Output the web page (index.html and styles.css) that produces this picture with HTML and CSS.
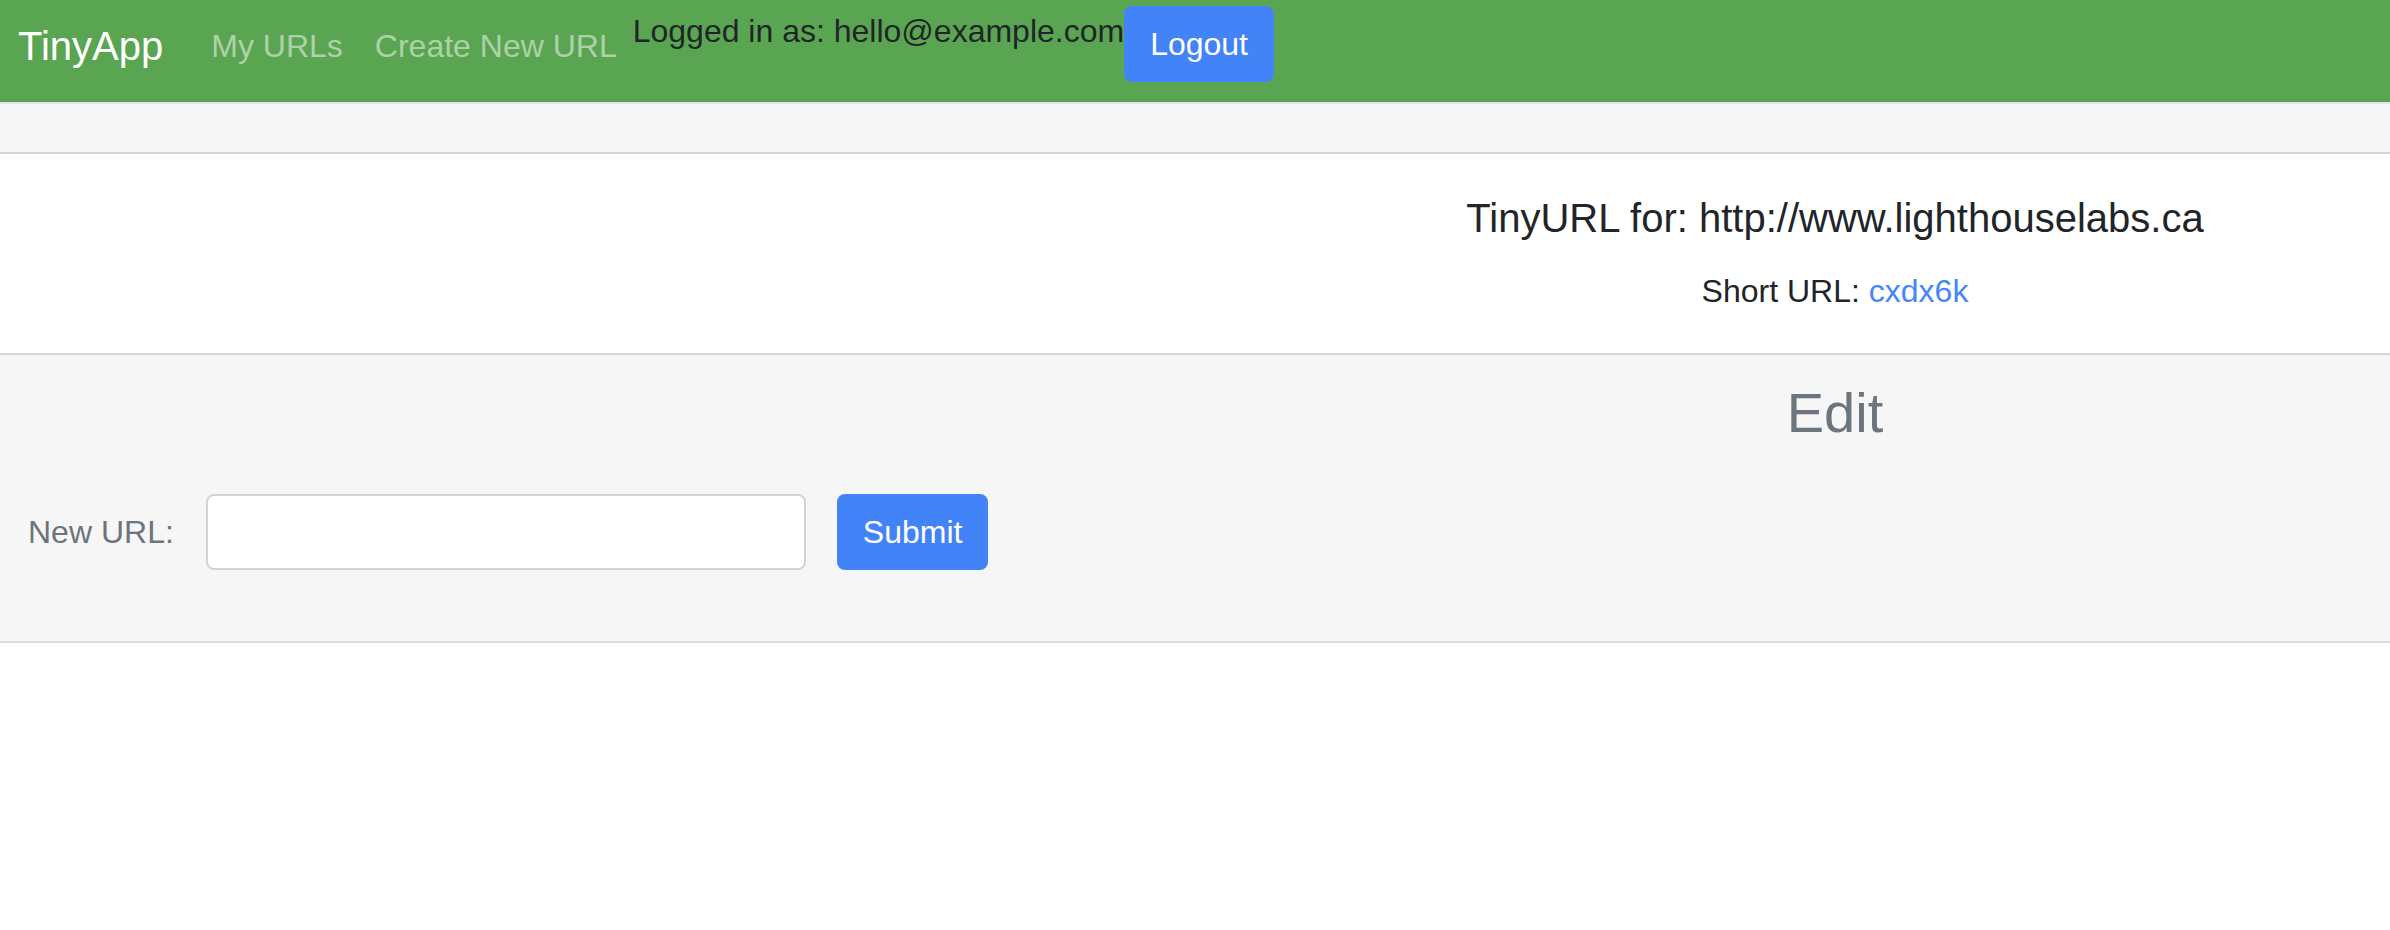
FILE: index.html
```html
<!DOCTYPE html>
<html lang="en">
<head>
<meta charset="utf-8">
<title>TinyApp</title>
<link rel="stylesheet" href="styles.css">
</head>
<body>
<nav class="navbar">
  <a class="brand" href="#">TinyApp</a>
  <div class="nav-links">
    <a class="nav-link" href="#">My URLs</a>
    <a class="nav-link" href="#">Create New URL</a>
  </div>
  <span class="user">Logged in as: hello@example.com</span>
  <button class="btn btn-primary" type="button">Logout</button>
</nav>
<main class="card">
  <div class="card-header"></div>
  <div class="card-body">
    <h5 class="card-title">TinyURL for: http://www.lighthouselabs.ca</h5>
    <p class="card-text">Short URL: <a class="link" href="#">cxdx6k</a></p>
  </div>
  <div class="card-footer">
    <h3 class="edit-title">Edit</h3>
    <form class="edit-form">
      <label class="form-label" for="longURL">New URL:</label>
      <input class="form-control" id="longURL" type="text">
      <button class="btn btn-primary" type="submit">Submit</button>
    </form>
  </div>
</main>
</body>
</html>
```
FILE: styles.css
```css
* { box-sizing: border-box; }

html, body {
  margin: 0;
  padding: 0;
}

body {
  font-family: "Liberation Sans", Arial, sans-serif;
  font-size: 32px;
  line-height: 48px;
  color: #212529;
  background: #fff;
}

a { text-decoration: none; }

.navbar {
  display: flex;
  align-items: flex-start;
  height: 102px;
  padding-left: 18px;
  background: #5aa551;
}

.brand {
  font-size: 40px;
  line-height: 60px;
  margin-top: 16px;
  margin-right: 32px;
  color: #fff;
}

.nav-links {
  display: flex;
  margin-top: 22px;
}

.nav-link {
  padding: 0 16px;
  color: #acd2a8;
}

.user {
  margin-top: 7px;
  color: #212529;
}

.navbar .btn {
  margin-top: 6px;
}

.btn {
  font-family: inherit;
  font-size: 32px;
  line-height: 48px;
  padding: 12px 24px;
  border: 2px solid transparent;
  border-radius: 8px;
  cursor: pointer;
}

.btn-primary {
  color: #fff;
  background: #4383f8;
  border-color: #4383f8;
}

.card {
  border-top: 2px solid #e4e4e4;
  border-bottom: 2px solid #dcdcdc;
}

.card-header {
  height: 50px;
  background: #f6f6f6;
  border-bottom: 2px solid #d6d6d6;
}

.card-body {
  padding: 40px 0 38px 1280px;
  text-align: center;
}

.card-title {
  margin: 0 0 25px;
  font-size: 40px;
  line-height: 48px;
  font-weight: 400;
}

.card-text {
  margin: 0;
}

.link {
  color: #4686f7;
}

.card-footer {
  background: #f6f6f6;
  border-top: 2px solid #d6d6d6;
  padding: 24px 0 71px;
  color: #6c757d;
}

.edit-title {
  margin: 0 0 48px 1280px;
  text-align: center;
  font-size: 56px;
  line-height: 67px;
  font-weight: 400;
}

.edit-form {
  display: flex;
  align-items: center;
  padding-left: 28px;
}

.form-label {
  margin-right: 32px;
}

.form-control {
  width: 600px;
  height: 76px;
  margin-right: 31px;
  padding: 12px 24px;
  font-family: inherit;
  font-size: 32px;
  color: #495057;
  background: #fff;
  border: 2px solid #ced4da;
  border-radius: 8px;
}
```
